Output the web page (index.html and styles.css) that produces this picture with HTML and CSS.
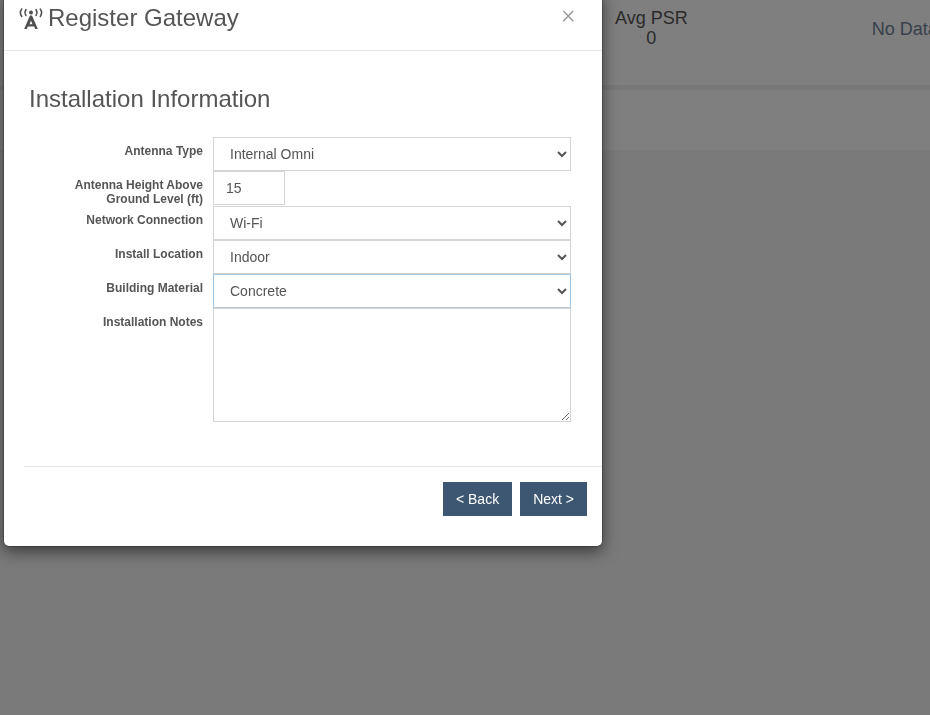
FILE: index.html
```html
<!DOCTYPE html>
<html lang="en">
<head>
<meta charset="utf-8">
<title>Register Gateway</title>
<link rel="stylesheet" href="styles.css">
</head>
<body>
<div class="page">
  <div class="stats">
    <div class="stat"><div>Avg PSR</div><div>0</div></div>
    <div class="nodata">No Data</div>
  </div>
  <div class="subbar"></div>
</div>
<div class="backdrop"></div>
<div class="modal">
  <header class="modal-header">
    <h4 class="modal-title">
      <svg class="tower" viewBox="0 0 26 24" width="26" height="24" aria-hidden="true">
        <circle cx="13" cy="5.500" r="2" fill="#4f4f4f"/>
        <g fill="none" stroke="#4f4f4f" stroke-width="1.500" stroke-linecap="round">
          <path d="M8 2.500q-2 3 0 6"/>
          <path d="M18 2.500q2 3 0 6"/>
          <path d="M3.800 2q-2.800 3.500 0 7.500"/>
          <path d="M22.200 2q2.800 3.500 0 7.500"/>
        </g>
        <path d="M12 8.500h2l5.800 13.500h-2.600l-1-2.500h-6.400l-1 2.500H6.200zM11.600 17.300h2.800l-1.400-3.700z" fill="#4f4f4f" fill-rule="evenodd"/>
      </svg>
      <span>Register Gateway</span>
    </h4>
    <button class="close" type="button" aria-label="Close">×</button>
  </header>
  <div class="modal-body">
    <h3 class="section-title">Installation Information</h3>
    <form class="form">
      <label class="lbl">Antenna Type</label>
      <select class="ctl"><option>Internal Omni</option></select>
      <label class="lbl">Antenna Height Above Ground Level (ft)</label>
      <input class="ctl short" type="text" value="15">
      <label class="lbl">Network Connection</label>
      <select class="ctl"><option>Wi-Fi</option></select>
      <label class="lbl">Install Location</label>
      <select class="ctl"><option>Indoor</option></select>
      <label class="lbl">Building Material</label>
      <select class="ctl focus"><option>Concrete</option></select>
      <label class="lbl">Installation Notes</label>
      <textarea class="ctl notes"></textarea>
    </form>
    <footer class="modal-footer">
      <button class="btn" type="button">&lt; Back</button>
      <button class="btn" type="button">Next &gt;</button>
    </footer>
  </div>
</div>
</body>
</html>
```
FILE: styles.css
```css
* { box-sizing: border-box; }
html, body { margin: 0; height: 100%; overflow: hidden; }
body {
  font-family: "Liberation Sans", Arial, sans-serif;
  font-size: 14px;
  color: #333;
  background: #f4f4f4;
}
.page { height: 715px; }
.stats {
  height: 90px;
  background: #fff;
  border-bottom: 5px solid #f0f0f0;
  display: flex;
  padding-left: 615px;
  white-space: nowrap;
  overflow: hidden;
}
.stat {
  font-size: 18px;
  line-height: 20px;
  text-align: center;
  padding-top: 8px;
  color: #555;
}
.nodata {
  font-size: 18px;
  margin-left: 184px;
  padding-top: 19px;
  color: #6f8196;
}
.subbar { height: 60px; background: #fff; }
.backdrop {
  position: fixed;
  inset: 0;
  background: rgba(0, 0, 0, .5);
}
.modal {
  position: absolute;
  left: 3px;
  top: -10px;
  width: 600px;
  height: 557px;
  background: #fff;
  border: 1px solid rgba(0, 0, 0, .2);
  border-radius: 6px;
  box-shadow: 0 5px 15px rgba(0, 0, 0, .5);
  background-clip: padding-box;
}
.modal-header {
  height: 60px;
  padding: 0 27px 5px 14px;
  border-bottom: 1px solid #e5e5e5;
  display: flex;
  justify-content: space-between;
  align-items: center;
}
.modal-title {
  margin: 0;
  font-size: 24px;
  font-weight: 400;
  color: #555;
  display: flex;
  align-items: center;
  gap: 4px;
}
.tower { display: block; margin-top: 2px; }
.close {
  border: 0;
  background: none;
  padding: 0;
  font: 300 26px/1 Roboto, "Liberation Sans", sans-serif;
  color: #999;
  margin-top: -8px;
}
.modal-body { padding: 0 0 0 20px; }
.section-title {
  margin: 35px 0 0 5px;
  font-size: 24px;
  font-weight: 400;
  line-height: 26px;
  color: #555;
}
.form {
  display: grid;
  grid-template-columns: 179px 358px;
  column-gap: 10px;
  margin-top: 25px;
}
.lbl {
  font-size: 12px;
  font-weight: 700;
  line-height: 14px;
  color: #555;
  text-align: right;
  padding: 7px 0 0 45px;
}
.ctl {
  display: block;
  width: 100%;
  height: 34px;
  padding: 6px 12px;
  border: 1px solid #d4d4d4;
  border-radius: 0;
  background: #fff;
  font-family: inherit;
  font-size: 14px;
  color: #555;
  outline: 0;
}
.short { width: 72px; height: 34px; margin-bottom: 1px; }
.focus { border-color: #9ec5e0; border-bottom-color: #b5c9d8; }
.notes { height: 114px; }
.modal-footer {
  display: flex;
  justify-content: flex-end;
  gap: 8px;
  margin-top: 44px;
  padding: 15px 15px 0 0;
  border-top: 1px solid #e5e5e5;
}
.btn {
  height: 34px;
  padding: 0 13px;
  border: 0;
  background: #3d5672;
  color: #fff;
  font-family: inherit;
  font-size: 14px;
}
```
